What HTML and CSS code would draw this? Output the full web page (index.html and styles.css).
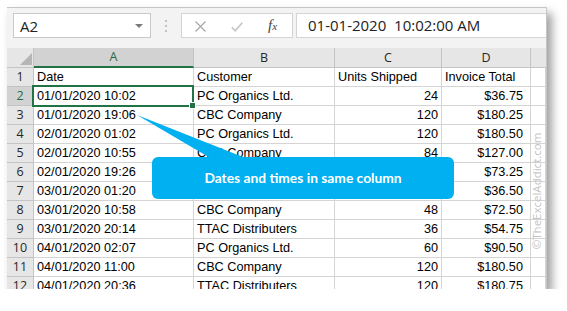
FILE: index.html
```html
<!DOCTYPE html>
<html>
<head>
<meta charset="utf-8">
<link rel="stylesheet" href="styles.css">
</head>
<body>
<div class="frame">
  <div class="fbar">
    <div class="namebox"><span class="nb-text">A2</span><span class="nb-arrow"></span></div>
    <div class="grip"><i></i><i></i><i></i></div>
    <div class="fbtns">
      <svg class="ic-x" width="11" height="11" viewBox="0 0 11 11"><path d="M0.5 0.5 L10.5 10.5 M10.5 0.5 L0.5 10.5" stroke="#a6a6a6" stroke-width="1.2" fill="none"/></svg>
      <svg class="ic-ok" width="12" height="10" viewBox="0 0 12 10"><path d="M0.8 5.2 L4.2 8.8 L11.3 0.8" stroke="#c4c4c4" stroke-width="1.6" fill="none"/></svg>
      <span class="fx">f<span class="fx-x">x</span></span>
    </div>
    <div class="finput">01-01-2020  10:02:00 AM</div>
  </div>
  <div class="grid">
    <div class="corner"><span class="tri"></span></div>
    <div class="ch sel">A</div>
    <div class="ch">B</div>
    <div class="ch">C</div>
    <div class="ch">D</div>
    <div class="ch last"></div>

    <div class="rh">1</div><div class="c">Date</div><div class="c">Customer</div><div class="c">Units Shipped</div><div class="c">Invoice Total</div><div class="c"></div>
    <div class="rh sel">2</div><div class="c">01/01/2020 10:02</div><div class="c">PC Organics Ltd.</div><div class="c r">24</div><div class="c r cur">$36.75</div><div class="c"></div>
    <div class="rh">3</div><div class="c">01/01/2020 19:06</div><div class="c">CBC Company</div><div class="c r">120</div><div class="c r cur">$180.25</div><div class="c"></div>
    <div class="rh">4</div><div class="c">02/01/2020 01:02</div><div class="c">PC Organics Ltd.</div><div class="c r">120</div><div class="c r cur">$180.50</div><div class="c"></div>
    <div class="rh">5</div><div class="c">02/01/2020 10:55</div><div class="c">CBC Company</div><div class="c r">84</div><div class="c r cur">$127.00</div><div class="c"></div>
    <div class="rh">6</div><div class="c">02/01/2020 19:26</div><div class="c">TTAC Distributers</div><div class="c r">48</div><div class="c r cur">$73.25</div><div class="c"></div>
    <div class="rh">7</div><div class="c">03/01/2020 01:20</div><div class="c">PC Organics Ltd.</div><div class="c r">24</div><div class="c r cur">$36.50</div><div class="c"></div>
    <div class="rh">8</div><div class="c">03/01/2020 10:58</div><div class="c">CBC Company</div><div class="c r">48</div><div class="c r cur">$72.50</div><div class="c"></div>
    <div class="rh">9</div><div class="c">03/01/2020 20:14</div><div class="c">TTAC Distributers</div><div class="c r">36</div><div class="c r cur">$54.75</div><div class="c"></div>
    <div class="rh">10</div><div class="c">04/01/2020 02:07</div><div class="c">PC Organics Ltd.</div><div class="c r">60</div><div class="c r cur">$90.50</div><div class="c"></div>
    <div class="rh">11</div><div class="c">04/01/2020 11:00</div><div class="c">CBC Company</div><div class="c r">120</div><div class="c r cur">$180.50</div><div class="c"></div>
    <div class="rh">12</div><div class="c">04/01/2020 20:36</div><div class="c">TTAC Distributers</div><div class="c r">120</div><div class="c r cur">$180.75</div><div class="c"></div>
  </div>

  <div class="selbox"><span class="handle"></span></div>
  <svg class="pointer" width="567" height="311" viewBox="0 0 567 311"><polygon points="130,107 205,151 241,151" fill="#00b0f0"/></svg>
  <div class="callout">Dates and times in same column</div>
  <div class="wm">©TheExcelAddict.com</div>
</div>
</body>
</html>
```

FILE: styles.css
```css
html, body {
  margin: 0;
  padding: 0;
  background: #ffffff;
}

.frame {
  position: relative;
  margin: 7px 0 0 7px;
  width: 539px;
  height: 281px;
  border-top: 1px solid #c6c6c6;
  border-right: 1px solid #c6c6c6;
  background: #ffffff;
  overflow: hidden;
  box-shadow: 5px 6px 9px rgba(0, 0, 0, 0.38);
}

/* formula bar */
.fbar {
  display: flex;
  align-items: flex-start;
  height: 40px;
  padding: 5px 0 0 6px;
  box-sizing: border-box;
  background: #f3f3f3;
}

.namebox {
  display: flex;
  align-items: center;
  justify-content: space-between;
  width: 138px;
  height: 25px;
  box-sizing: border-box;
  border: 1px solid #c9c9c9;
  background: #fff;
  padding: 0 7px 0 6px;
  font-family: "Open Sans", "Noto Sans", sans-serif;
  font-size: 15px;
  color: #222;
}

.nb-arrow {
  width: 0;
  height: 0;
  border-left: 4px solid transparent;
  border-right: 4px solid transparent;
  border-top: 4px solid #7a7a7a;
}

.grip {
  display: flex;
  flex-direction: column;
  gap: 3px;
  margin: 7px 0 0 14px;
}
.grip i {
  display: block;
  width: 2px;
  height: 2px;
  background: #c2c2c2;
}

.fbtns {
  display: flex;
  align-items: center;
  width: 112px;
  height: 25px;
  box-sizing: border-box;
  margin-left: 14px;
  border: 1px solid #d4d4d4;
  background: #fff;
  padding-left: 13px;
}
.ic-x { margin-top: 1px; }
.ic-ok { margin-left: 25px; margin-top: 2px; }
.fx {
  margin-left: 25px;
  font-family: "Liberation Serif", serif;
  font-style: italic;
  font-size: 15px;
  color: #444;
}
.fx-x {
  font-size: 11px;
}

.finput {
  flex: 1;
  height: 25px;
  box-sizing: border-box;
  margin-left: 3px;
  border: 1px solid #d4d4d4;
  border-right: none;
  background: #fff;
  padding-left: 11px;
  font-family: "Open Sans", "Noto Sans", sans-serif;
  font-size: 15px;
  line-height: 22px;
  color: #222;
  white-space: pre;
}

/* grid */
.grid {
  display: grid;
  grid-template-columns: 27px 160px 141px 107px 89px 1fr;
  grid-template-rows: 20px;
  grid-auto-rows: 19px;
}

.corner, .ch, .rh, .c {
  box-sizing: border-box;
  border-right: 1px solid #d4d4d4;
  border-bottom: 1px solid #d4d4d4;
  white-space: nowrap;
  overflow: hidden;
}

.corner {
  position: relative;
  background: #e6e6e6;
  border-color: #c4c4c4;
}
.tri {
  position: absolute;
  right: 1px;
  bottom: 2px;
  width: 0;
  height: 0;
  border-left: 12px solid transparent;
  border-bottom: 12px solid #b5b5b5;
}

.ch {
  background: #e6e6e6;
  border-right-color: #c4c4c4;
  border-bottom-color: #c4c4c4;
  text-align: center;
  font-family: "Open Sans", "Noto Sans", sans-serif;
  font-size: 12.5px;
  line-height: 19px;
  color: #262626;
}
.ch.last { border-right: none; }
.ch.sel {
  background: #d2d2d2;
  color: #1e6b41;
  border-bottom: 2px solid #217346;
  line-height: 18px;
}

.rh {
  background: #e6e6e6;
  border-right-color: #c4c4c4;
  border-bottom-color: #c4c4c4;
  text-align: center;
  font-family: "Open Sans", "Noto Sans", sans-serif;
  font-size: 12.5px;
  line-height: 18px;
  color: #262626;
}
.rh.sel {
  background: #d2d2d2;
  color: #1e6b41;
}

.c {
  padding: 0 3px;
  font-family: "Liberation Sans", Arial, sans-serif;
  font-size: 12.7px;
  line-height: 19px;
  color: #000;
}
.c.r { text-align: right; }
.c.cur { padding-right: 7px; }

/* overlays */
.selbox {
  position: absolute;
  left: 25px;
  top: 77px;
  width: 162px;
  height: 22px;
  box-sizing: border-box;
  border: 2px solid #217346;
}
.handle {
  position: absolute;
  right: -4px;
  bottom: -4px;
  width: 5px;
  height: 5px;
  background: #217346;
  border: 1px solid #fff;
}

.pointer {
  position: absolute;
  left: 0;
  top: 0;
}

.callout {
  position: absolute;
  left: 145px;
  top: 149px;
  width: 302px;
  height: 42px;
  border-radius: 6px;
  background: #00b0f0;
  color: #fff;
  font-family: "Lato", "Liberation Sans", sans-serif;
  font-weight: bold;
  font-size: 13.8px;
  line-height: 42px;
  text-align: center;
}

.wm {
  position: absolute;
  left: 529px;
  top: 183px;
  transform: translate(-50%, -50%) rotate(-90deg);
  font-family: "Open Sans", "Noto Sans", sans-serif;
  font-size: 11.5px;
  color: #c3c3c3;
  white-space: nowrap;
}
```
